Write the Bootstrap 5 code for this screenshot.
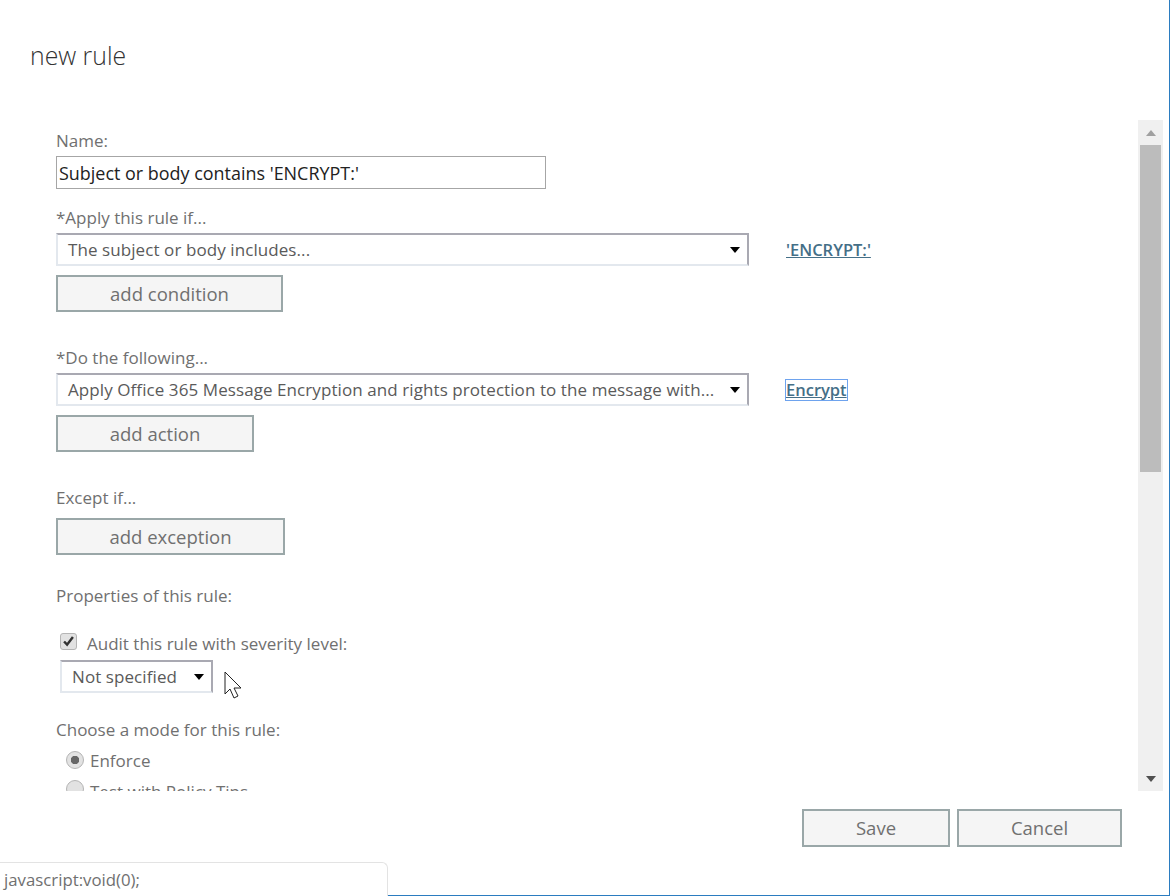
<!DOCTYPE html>
<html lang="en">
<head>
<meta charset="utf-8">
<title>new rule</title>
<link href="https://cdn.jsdelivr.net/npm/bootstrap@5.3.0/dist/css/bootstrap.min.css" rel="stylesheet">
<style>
html,body{height:100%;}
body{margin:0;background:#fff;font-family:"Open Sans","Noto Sans","Liberation Sans",sans-serif;font-size:17px;color:#666;overflow:hidden;}
.win{height:896px;border-right:1px solid #2b7cc0;border-bottom:1px solid #2b7cc0;position:relative;}
.ttl{height:120px;padding:35px 0 0 30px;margin:0;font-size:24.8px;font-weight:300;line-height:40px;color:#333;}
.pane{height:671px;margin-right:6px;overflow:hidden;}
.form-area{padding:9px 0 0 56px;min-width:0;}
.lbl{display:block;height:24px;line-height:24px;margin:0 0 3px;font-size:17px;color:#707070;}
.txt{display:block;width:490px;height:33px;border:1px solid #a6a6a6;background:#fff;padding:0 2px;font:inherit;font-size:17.95px;color:#222;outline:0;}
.sel{height:33px;width:693px;border-style:solid;border-width:2px;border-color:#a9a9b2 #a9a9b2 #e3e8ee #e3e8ee;padding:0 7px 0 10px;color:#5a5a5a;font-size:17px;letter-spacing:.08px;white-space:nowrap;}
.sel-s{width:153px;}
.caret{width:0;height:0;border-left:5.5px solid transparent;border-right:5.5px solid transparent;border-top:6px solid #000;flex:none;}
.lnk{margin-left:37px;color:#456f87;font-weight:600;font-size:16.5px;line-height:20px;text-decoration:underline;}
.lnk-f{outline:1px solid #6ea3ee;}
.act{display:block;height:37px;background:#f5f5f5;border:2px solid #9aa7a8;color:#707070;font-size:18.5px;line-height:31px;padding:0;border-radius:0;}
.act:hover{background:#f5f5f5;border-color:#9aa7a8;color:#707070;}
.w-c{width:227px;margin-top:9px;}.w-a{width:198px;margin-top:9px;}.w-e{width:229px;margin-top:8px;}
.w-s{width:148px;height:38px;padding-bottom:2px;}.w-x{width:165px;height:38px;padding-bottom:2px;}
.mt-34{margin-top:34px;}.mt-17{margin-top:17px;}.mt-29{margin-top:29px;}.mt-25{margin-top:25px;}
.row-chk{margin-top:24px;height:24px;padding-left:4px;}
.row-chk .form-check-input,.row-rad .form-check-input{margin:0;flex:none;background-color:#e2e2e2;border:1px solid #b5b5b5;box-shadow:none;}
.row-chk .form-check-input{width:17px;height:17px;border-radius:3px;margin-top:-6px;background-image:url("data:image/svg+xml,%3csvg xmlns='http://www.w3.org/2000/svg' viewBox='0 0 17 17'%3e%3cpath d='M3.5 8.5l3.4 3.6L13.5 3.5' fill='none' stroke='%23333' stroke-width='2.8'/%3e%3c/svg%3e");background-size:100% 100%;}
.row-rad{height:24px;padding-left:10px;}
.row-rad .form-check-input{width:18px;height:18px;border-radius:50%;margin-top:-3px;}
.row-rad .form-check-input:checked{background-image:radial-gradient(circle,#666 0 4px,transparent 4.5px);background-size:100% 100%;}
.mode1{margin-top:7px;}.mode2{margin-top:5px;}
.mode2 .tl{margin-top:3px;}
.tl{font-size:17px;color:#707070;line-height:24px;}
.tl-a{margin-left:2px;}.tl-r{margin-left:2px;}
.sb{width:25px;height:671px;background:#f0f0f0;flex:none;padding:0 2px;}
.sb-end{height:25px;}
.sb-thumb{height:327px;background:#bcbcbc;}
.sb-gap{height:294px;}
.tri-u{width:0;height:0;border-left:5.5px solid transparent;border-right:5.5px solid transparent;border-bottom:6px solid #a0a0a0;}
.tri-d{width:0;height:0;border-left:5.5px solid transparent;border-right:5.5px solid transparent;border-top:6px solid #505050;}
.foot{padding:18px 47px 0 0;gap:7px;}
.stat{position:absolute;left:-1px;bottom:-1px;width:389px;height:34px;background:#fff;border:1px solid #e3e3e3;border-bottom:0;border-radius:0 6px 0 0;padding:0 0 0 4px;font-size:16.8px;line-height:33px;color:#707070;}
.ptr{position:absolute;left:224px;top:671px;}
</style>
</head>
<body>
<div class="win">
  <h1 class="ttl">new rule</h1>
  <div class="pane d-flex">
    <form class="form-area flex-grow-1 overflow-hidden">
      <label class="lbl" for="rn">Name:</label>
      <input id="rn" class="txt" type="text" value="Subject or body contains 'ENCRYPT:'">

      <span class="lbl mt-17">*Apply this rule if...</span>
      <div class="d-flex align-items-center">
        <div class="sel d-flex align-items-center justify-content-between"><span>The subject or body includes...</span><span class="caret"></span></div>
        <a class="lnk" href="#">'ENCRYPT:'</a>
      </div>
      <button type="button" class="btn act w-c">add condition</button>

      <span class="lbl mt-34">*Do the following...</span>
      <div class="d-flex align-items-center">
        <div class="sel d-flex align-items-center justify-content-between"><span>Apply Office 365 Message Encryption and rights protection to the message with...</span><span class="caret"></span></div>
        <a class="lnk lnk-f" href="#">Encrypt</a>
      </div>
      <button type="button" class="btn act w-a">add action</button>

      <span class="lbl mt-34 mb-0">Except if...</span>
      <button type="button" class="btn act w-e">add exception</button>

      <span class="lbl mt-29 mb-0">Properties of this rule:</span>
      <div class="row-chk d-flex align-items-center gap-2">
        <input class="form-check-input" type="checkbox" checked id="au">
        <label class="tl tl-a" for="au">Audit this rule with severity level:</label>
      </div>
      <div class="sel sel-s d-flex align-items-center justify-content-between ms-1 mt-1"><span>Not specified</span><span class="caret"></span></div>

      <span class="lbl mb-0 mt-25">Choose a mode for this rule:</span>
      <div class="row-rad mode1 d-flex align-items-center gap-1">
        <input class="form-check-input" type="radio" name="m" checked id="m1">
        <label class="tl tl-r" for="m1">Enforce</label>
      </div>
      <div class="row-rad mode2 d-flex align-items-center gap-1">
        <input class="form-check-input" type="radio" name="m" id="m2">
        <label class="tl tl-r" for="m2">Test with Policy Tips</label>
      </div>
    </form>
    <div class="sb">
      <div class="sb-end d-flex align-items-center justify-content-center"><span class="tri-u"></span></div>
      <div class="sb-thumb"></div>
      <div class="sb-gap"></div>
      <div class="sb-end d-flex align-items-center justify-content-center"><span class="tri-d"></span></div>
    </div>
  </div>
  <div class="foot d-flex justify-content-end">
    <button type="button" class="btn act w-s">Save</button>
    <button type="button" class="btn act w-x">Cancel</button>
  </div>
  <div class="stat">javascript:void(0);</div>
  <svg class="ptr" width="21" height="29" viewBox="0 0 21 29" aria-hidden="true"><path d="M1 1v22l5-5 4 9 4-2-4-8h7z" fill="#fff" stroke="#222" stroke-width="1"/></svg>
</div>
</body>
</html>
